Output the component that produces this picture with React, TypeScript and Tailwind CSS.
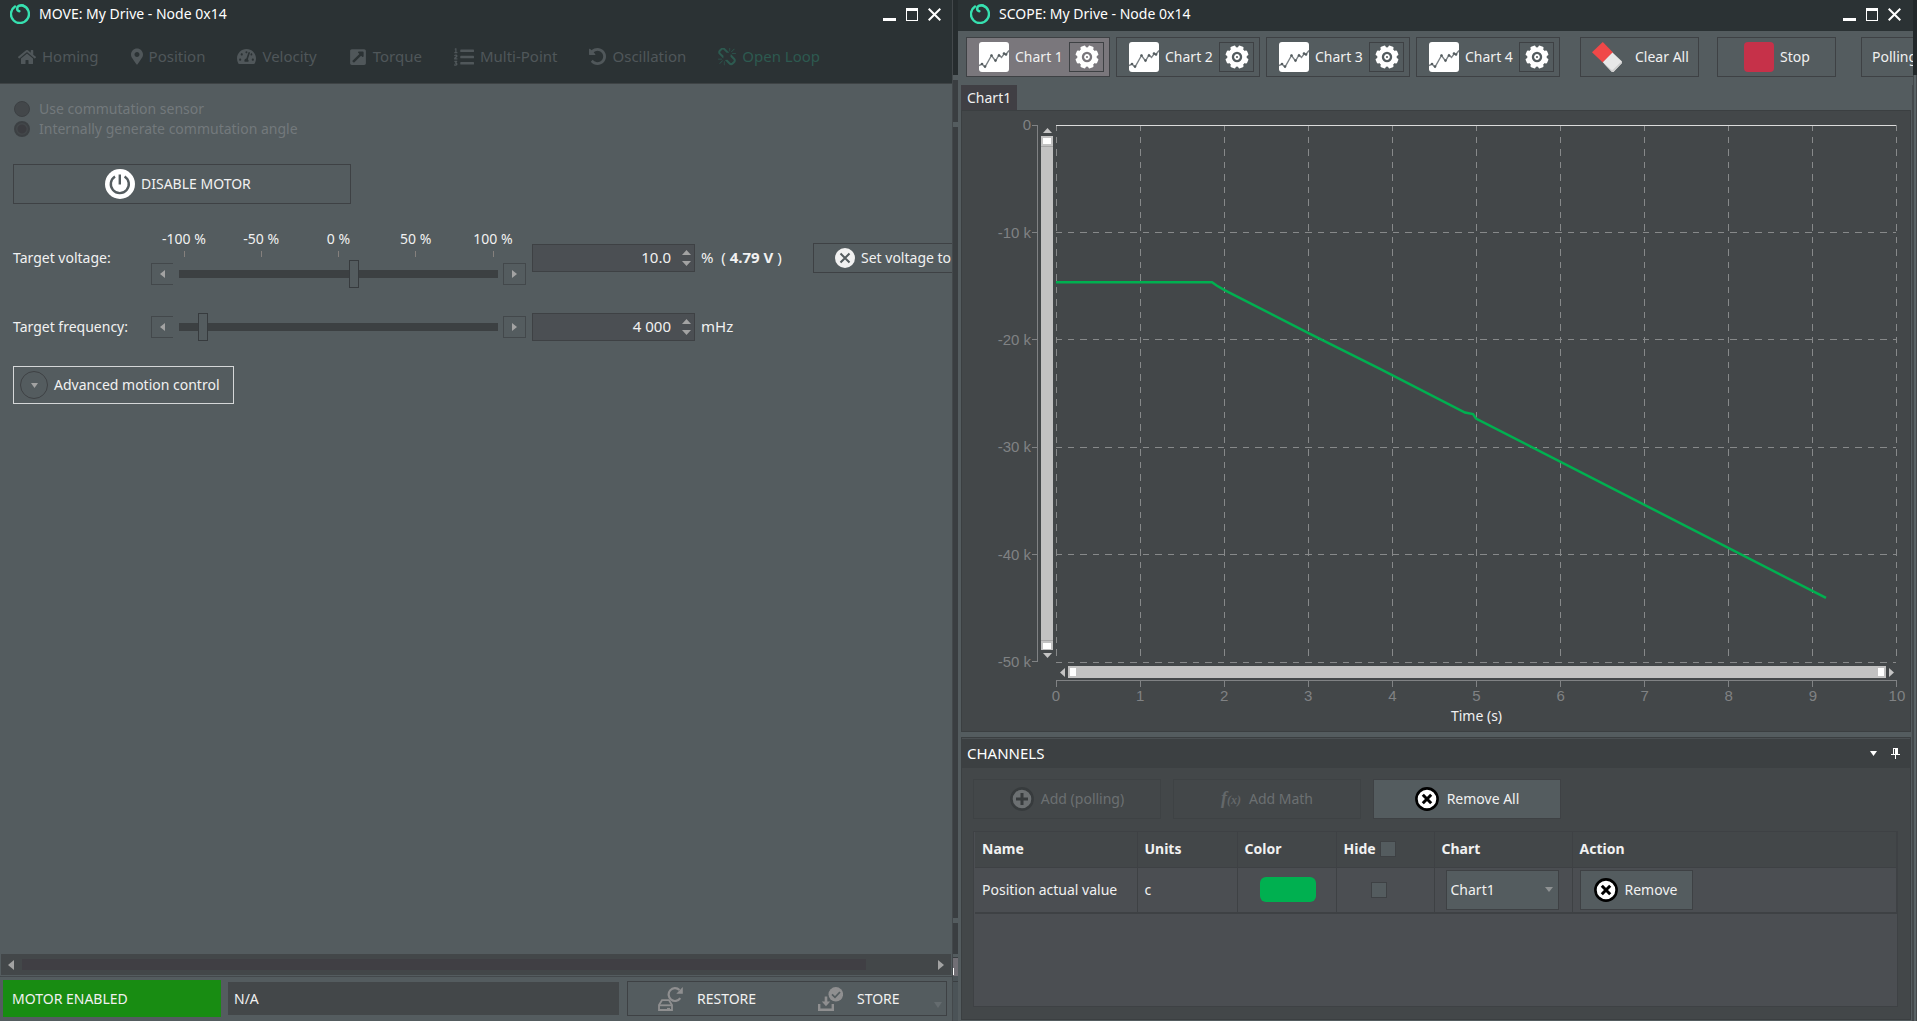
import { useState } from "react";
import type { ReactNode } from "react";
import { FaHome, FaMapMarkerAlt, FaTachometerAlt, FaExternalLinkSquareAlt, FaListOl } from "react-icons/fa";

/* ---------- icons ---------- */

function Logo() {
  return (
    <svg viewBox="0 0 20 20" className="size-5 shrink-0" fill="none" stroke="#37e0b0" strokeLinecap="round" aria-hidden="true">
      <path d="M5 2.500A9 9 0 1 0 12.800 1.500" strokeWidth="2.400" />
      <path d="M12.800 1.500C9.500 .8 7.200 2.500 7.200 4.400S8.200 7.300 9.300 7.200" strokeWidth="2.600" />
    </svg>
  );
}

type Direction = "up" | "down" | "left" | "right";
const triangles: Record<Direction, string> = {
  up: "M0 10 5 0 10 10Z",
  down: "M0 0H10L5 10Z",
  left: "M10 0V10L0 5Z",
  right: "M0 0 10 5 0 10Z",
};

function Triangle({ dir, className }: { dir: Direction; className: string }) {
  return (
    <svg viewBox="0 0 10 10" preserveAspectRatio="none" className={className} fill="currentColor" aria-hidden="true">
      <path d={triangles[dir]} />
    </svg>
  );
}

function UndoIcon() {
  return (
    <svg viewBox="0 128 1536 1536" className="size-[17px]" fill="currentColor" aria-hidden="true">
      <path d="M1536 896q0 156-61 298t-164 245-245 164-298 61q-172 0-327-72.500t-264-204.500q-7-10-6.500-22.500t8.500-20.500l137-138q10-9 25-9 16 2 23 12 73 95 179 147t225 52q104 0 198.500-40.500t163.500-109.500 109.500-163.500 40.500-198.500-40.500-198.500-109.500-163.500-163.500-109.500-198.500-40.500q-98 0-188 35.500t-160 101.500l137 138q31 30 14 69-17 40-59 40h-448q-26 0-45-19t-19-45v-448q0-42 40-59 39-17 69 14l130 129q107-101 244.500-156.500t284.500-55.500q156 0 298 61t245 164 164 245 61 298z" />
    </svg>
  );
}

function BrokenChainIcon() {
  return (
    <svg viewBox="0 64 1664 1664" className="size-[18px]" fill="currentColor" aria-hidden="true">
      <path d="M439 1271l-256 256q-11 9-23 9t-23-9q-9-10-9-23t9-23l256-256q10-9 23-9t23 9q9 10 9 23t-9 23zm169 41v320q0 14-9 23t-23 9-23-9-9-23v-320q0-14 9-23t23-9 23 9 9 23zm-224-224q0 14-9 23t-23 9h-320q-14 0-23-9t-9-23 9-23 23-9h320q14 0 23 9t9 23zm1264 128q0 120-85 203l-147 146q-83 83-203 83-121 0-204-85l-334-335q-21-21-42-56l239-18 273 274q27 27 68 27.500t68-26.500l147-146q28-28 28-67 0-40-28-68l-274-275 18-239q35 21 56 42l336 336q84 86 84 204zm-617-724l-239 18-273-274q-28-28-68-28-39 0-68 27l-147 146q-28 28-28 67 0 40 28 68l274 274-18 240q-35-21-56-42l-336-336q-84-86-84-204 0-120 85-203l147-146q83-83 203-83 121 0 204 85l334 335q21 21 42 56zm633 84q0 14-9 23t-23 9h-320q-14 0-23-9t-9-23 9-23 23-9h320q14 0 23 9t9 23zm-544-544v320q0 14-9 23t-23 9-23-9-9-23v-320q0-14 9-23t23-9 23 9 9 23zm407 151l-256 256q-11 9-23 9t-23-9q-9-10-9-23t9-23l256-256q10-9 23-9t23 9q9 10 9 23t-9 23z" />
    </svg>
  );
}

function PowerIcon() {
  return (
    <svg viewBox="0 0 30 30" className="size-[30px]" aria-hidden="true">
      <circle cx="15" cy="15" r="15" fill="#fff" />
      <g fill="none" stroke="#545c5f" strokeWidth="2.400">
        <path d="M10 7.500A9 9 0 1 0 19.600 7.500" />
        <path d="M14.800 5.500v10" />
      </g>
    </svg>
  );
}

function CircleCross() {
  return (
    <svg viewBox="0 0 20 20" className="size-5 shrink-0" aria-hidden="true">
      <circle cx="10" cy="10" r="10" fill="#f1f1f1" />
      <path d="M5.500 5.500l9 9M14.500 5.500l-9 9" stroke="#545c5f" strokeWidth="2" />
    </svg>
  );
}

function RemoveIcon() {
  return (
    <svg viewBox="0 0 24 24" className="size-6 shrink-0" aria-hidden="true">
      <circle cx="12" cy="12" r="10.600" fill="#fff" stroke="#000" strokeWidth="2.600" />
      <path d="M7.800 7.800l8.400 8.400M16.200 7.800l-8.400 8.400" stroke="#000" strokeWidth="3" />
    </svg>
  );
}

function AddIcon() {
  return (
    <svg viewBox="0 0 24 24" className="size-6 shrink-0" aria-hidden="true">
      <circle cx="12" cy="12" r="10.600" fill="#6c7072" stroke="#373b3d" strokeWidth="2.600" />
      <path d="M12 6v12M6 12h12" stroke="#373b3d" strokeWidth="3" />
    </svg>
  );
}

function ChartIcon() {
  return (
    <svg viewBox="0 0 30 30" className="size-[30px] shrink-0" aria-hidden="true">
      <rect width="30" height="30" rx="3" fill="#fff" />
      <path
        d="M0 23.500 3 22l3 3 6.500-11.500 4 5.500L20 13l2.500 2.500L25 12l2 .500L30 8.500"
        fill="none"
        stroke="#7b8184"
        strokeWidth="1.400"
      />
      <g fill="#545c5f">
        <circle cx="3" cy="22" r="1.300" />
        <circle cx="6" cy="24.500" r="1.300" />
        <circle cx="12.500" cy="13.500" r="1.300" />
        <circle cx="16.500" cy="18.500" r="1.300" />
        <circle cx="20" cy="13.500" r="1.300" />
        <circle cx="25" cy="11.500" r="1.300" />
        <circle cx="27" cy="12.500" r="1.300" />
      </g>
    </svg>
  );
}

const teeth = [22.5, 67.5, 112.5, 157.5, 202.5, 247.5, 292.5, 337.5];
function GearIcon() {
  return (
    <svg viewBox="-12 -12 24 24" className="size-6" aria-hidden="true">
      <circle r="7.500" fill="none" stroke="#fff" strokeWidth="4.600" />
      {teeth.map((a) => (
        <rect key={a} x="-2.700" y="-11.600" width="5.400" height="4" rx="1.200" fill="#fff" transform={`rotate(${a})`} />
      ))}
      <circle r="2" fill="none" stroke="#fff" strokeWidth="1.800" />
    </svg>
  );
}

function EraserIcon() {
  return (
    <svg viewBox="0 0 30 30" className="size-[30px] shrink-0" aria-hidden="true">
      <path d="M10.800 0 21 10.500 10.800 20.500 0 10.300Z" fill="#f04848" />
      <path d="M20.500 10.500 29.500 19q1 1.200 0 2.400l-7.600 8q-1.200 1-2.400 0L10.800 20.300Z" fill="#e8e8e8" />
      <path d="M11.600 21.200 19.500 29.400q1.200 1 2.400 0l7.600-8q1-1.200.2-2.200l-8.500 8.300q-1 .8-2 0Z" fill="#cfcfcf" />
    </svg>
  );
}

function RestoreIcon() {
  return (
    <svg viewBox="0 0 25 24" className="h-6 w-[25px]" aria-hidden="true" fill="none" stroke="#8f8f90">
      <path d="M1 23V18L4 13.200h7L14 18v5Z" strokeWidth="1.800" />
      <path d="M1 18.300h13" strokeWidth="1.800" />
      <path d="M9 21.500h3" strokeWidth="1.200" />
      <path d="M22.300 11.200A6.400 6.400 0 1 1 21.500 3" strokeWidth="2.200" />
      <path d="M24.800 0v6.800h-6.500Z" fill="#8f8f90" stroke="none" />
    </svg>
  );
}

function StoreIcon() {
  return (
    <svg viewBox="0 0 25 24" className="h-6 w-[25px]" aria-hidden="true" fill="none" stroke="#8f8f90">
      <circle cx="17.800" cy="7.300" r="7.300" fill="#8f8f90" stroke="none" />
      <path d="M14 7.300l3 3 5-5.300" stroke="#545c5f" strokeWidth="1.800" />
      <path d="M1.200 17v5.800h13.600V17" strokeWidth="2.400" />
      <path d="M8 9.500v7" strokeWidth="2.600" />
      <path d="M3.800 14.500h8.400L8 19.200Z" fill="#8f8f90" stroke="none" />
    </svg>
  );
}

function PinIcon() {
  return (
    <svg viewBox="0 0 9 11" className="h-[11px] w-[9px]" aria-hidden="true" shapeRendering="crispEdges">
      <path d="M2 0h5v6h2v1H0V6h2Z M4 7h1v4H4Z" fill="#fff" />
      <path d="M3 1h1v5H3Z" fill="#3c4042" />
    </svg>
  );
}

/* ---------- window frame ---------- */

function TitleBar({ title, className }: { title: string; className: string }) {
  return (
    <header className={`flex h-[31px] shrink-0 items-center bg-[#2b3234] pb-[3px] text-white ${className}`}>
      <Logo />
      <h1 className="ml-[9px] flex-1 text-sm whitespace-nowrap">{title}</h1>
      <div className="flex h-[13px] gap-[10px]">
        <button aria-label="Minimize" className="flex w-[13px] items-end">
          <span className="h-[3px] w-full bg-white" />
        </button>
        <button aria-label="Maximize" className="h-[13px] w-3 border border-t-[3px] border-white" />
        <button aria-label="Close" className="size-[13px]">
          <svg viewBox="0 0 13 13" stroke="#fff" strokeWidth="2" aria-hidden="true">
            <path d="M.700.700l11.600 11.600M12.300.700.700 12.300" />
          </svg>
        </button>
      </div>
    </header>
  );
}

/* ---------- MOVE window ---------- */

const modes = [
  { name: "Homing", icon: <FaHome className="size-[18px]" /> },
  { name: "Position", icon: <FaMapMarkerAlt className="h-[17px] w-3" /> },
  { name: "Velocity", icon: <FaTachometerAlt className="size-[19px]" /> },
  { name: "Torque", icon: <FaExternalLinkSquareAlt className="size-[18px]" /> },
  { name: "Multi-Point", icon: <FaListOl className="size-5" /> },
  { name: "Oscillation", icon: <UndoIcon /> },
  { name: "Open Loop", icon: <BrokenChainIcon /> },
];

function Slider(props: { label: string; min: number; max: number; value: number; onChange: (v: number) => void }) {
  const { label, min, max, value, onChange } = props;
  const step = (max - min) / 100;
  const clamp = (v: number) => Math.min(max, Math.max(min, v));
  return (
    <div className="flex h-7 w-[375px] items-center">
      <button
        aria-label={`${label} down`}
        onClick={() => onChange(clamp(value - step))}
        className="flex h-[22px] w-[22px] items-center justify-center border-y border-l border-[#43484b] text-[#a3a3a3]"
      >
        <Triangle dir="left" className="h-2 w-[5px]" />
      </button>
      <input
        type="range"
        aria-label={label}
        min={min}
        max={max}
        value={value}
        onChange={(e) => onChange(Number(e.target.value))}
        className="mr-[5px] ml-[6px] h-7 min-w-0 flex-1 appearance-none bg-transparent [&::-webkit-slider-runnable-track]:h-2 [&::-webkit-slider-runnable-track]:bg-[#3c4042] [&::-webkit-slider-thumb]:-mt-[10px] [&::-webkit-slider-thumb]:h-7 [&::-webkit-slider-thumb]:w-[10px] [&::-webkit-slider-thumb]:appearance-none [&::-webkit-slider-thumb]:border [&::-webkit-slider-thumb]:border-[#373b3e] [&::-webkit-slider-thumb]:bg-[#545c5f]"
      />
      <button
        aria-label={`${label} up`}
        onClick={() => onChange(clamp(value + step))}
        className="flex h-[22px] w-[23px] items-center justify-center border border-[#43484b] text-[#a3a3a3]"
      >
        <Triangle dir="right" className="h-2 w-[5px]" />
      </button>
    </div>
  );
}

function Spinner({ id, value }: { id: string; value: string }) {
  return (
    <div className="flex h-7 w-[163px] border border-[#3e4144] bg-[#4b4f53]">
      <input
        id={id}
        type="text"
        defaultValue={value}
        className="min-w-0 flex-1 bg-transparent pr-[11px] text-right text-[15px] outline-none"
      />
      <div className="flex w-[12px] flex-col justify-between py-[5px] text-[#a3a3a3]">
        <button aria-label="Increase" className="flex">
          <Triangle dir="up" className="h-[5px] w-[9px]" />
        </button>
        <button aria-label="Decrease" className="flex">
          <Triangle dir="down" className="h-[5px] w-[9px]" />
        </button>
      </div>
    </div>
  );
}

function MoveWindow() {
  const [voltage, setVoltage] = useState(10);
  const [frequency, setFrequency] = useState(4000);
  return (
    <section className="flex min-w-0 flex-col border-r border-[#43484b] bg-[#545c5f]">
      <TitleBar title="MOVE: My Drive - Node 0x14" className="pr-[11px] pl-[10px]" />
      <nav className="flex h-[53px] shrink-0 items-center gap-8 overflow-hidden border-b border-[#3e4345] bg-[#2b3234] pl-[18px]">
        {modes.map((m, i) => (
          <button
            key={m.name}
            className={
              i === 6
                ? "flex items-center gap-[6px] text-[15px] whitespace-nowrap text-[#2d5a50]"
                : "flex items-center gap-[6px] text-[15px] whitespace-nowrap text-[#50575a]"
            }
          >
            {m.icon}
            {m.name}
          </button>
        ))}
      </nav>

      <div className="min-h-0 flex-1 overflow-hidden pl-[13px]">
        <fieldset disabled className="mt-[15px] text-sm text-[#73797c]">
          {["Use commutation sensor", "Internally generate commutation angle"].map((text, i) => (
            <label key={text} className="flex h-5 items-center gap-[9px] pl-px">
              <input
                type="radio"
                name="commutation"
                defaultChecked={i === 1}
                className="size-4 appearance-none rounded-full border border-[#3c4043] bg-[#43474a] checked:border-2 checked:bg-[radial-gradient(circle,#3b3c40_0_4px,#43474a_5px)]"
              />
              {text}
            </label>
          ))}
        </fieldset>

        <button className="mt-[25px] flex h-10 w-[338px] items-center gap-[6px] border border-[#3e4144] pl-[91px] text-sm">
          <PowerIcon />
          DISABLE MOTOR
        </button>

        <div className="mt-[25px] grid grid-cols-[138px_375px_auto] gap-y-[25px] text-sm">
          <label htmlFor="voltage" className="pt-[19px]">
            Target voltage:
          </label>
          <div>
            <div className="flex w-[375px] justify-between px-[33px] text-center">
              {["-100 %", "-50 %", "0 %", "50 %", "100 %"].map((t) => (
                <div key={t} className="flex w-0 flex-col items-center whitespace-nowrap">
                  <span className="pb-[2px] leading-5">{t}</span>
                  <span className="h-[6px] w-px bg-[#85807d]" />
                </div>
              ))}
            </div>
            <div className="pt-[3px]">
              <Slider label="Voltage slider" min={-100} max={100} value={voltage} onChange={setVoltage} />
            </div>
          </div>
          <div className="flex items-start pt-[14px] pl-[6px] whitespace-nowrap">
            <div className="pt-px">
              <Spinner id="voltage" value="10.0" />
            </div>
            <span className="w-[118px] pt-1 pl-[6px] text-[15px] whitespace-pre">
              %&nbsp; ( <b>4.79 V</b> )
            </span>
            <button className="flex h-[30px] w-[200px] shrink-0 items-center gap-[6px] border border-[#3e4144] pl-[21px]">
              <CircleCross />
              Set voltage to 0
            </button>
          </div>

          <label htmlFor="frequency" className="pt-1">
            Target frequency:
          </label>
          <Slider label="Frequency slider" min={0} max={65000} value={frequency} onChange={setFrequency} />
          <div className="flex items-center pl-[6px] text-[15px]">
            <Spinner id="frequency" value="4 000" />
            <span className="pl-[6px]">mHz</span>
          </div>
        </div>

        <button className="mt-[25px] flex h-[38px] items-center gap-[6px] border border-[#d5d7d8] pr-[13px] pl-[6px] text-sm">
          <span className="flex size-7 items-center justify-center rounded-full border border-[#3e4144] text-[#a3a3a3]">
            <Triangle dir="down" className="h-[5px] w-[7px]" />
          </span>
          Advanced motion control
        </button>
      </div>

      <div className="mx-px flex h-[21px] shrink-0 items-center bg-[#434749] px-[7px] text-[#a3a3a3]">
        <Triangle dir="left" className="h-[10px] w-[6px]" />
        <div className="mx-2 flex-1">
          <div className="h-[11px] w-[93%] bg-[#403f44]" />
        </div>
        <Triangle dir="right" className="h-[10px] w-[6px]" />
      </div>

      <footer className="mt-px flex h-[45px] shrink-0 items-center border-t border-[#43484b] pr-[5px] pb-1 pl-[3px] text-sm">
        <div className="mt-[3px] flex h-[37px] w-[218px] items-center bg-[#188c12] pl-[9px]">MOTOR ENABLED</div>
        <div className="mt-[3px] ml-[7px] flex h-[33px] min-w-0 flex-1 items-center bg-[#434749] pl-[6px]">N/A</div>
        <div className="mt-[3px] ml-2 flex h-[35px] w-[320px] items-center border border-[#3e4144] pl-[30px]">
          <button className="flex w-40 items-center gap-[14px]">
            <RestoreIcon />
            RESTORE
          </button>
          <button className="flex items-center gap-[14px]">
            <StoreIcon />
            STORE
          </button>
          <Triangle dir="down" className="mt-3 mr-[4px] ml-auto h-[6px] w-2 text-[#656c6f]" />
        </div>
      </footer>
    </section>
  );
}

function Splitter() {
  return (
    <div className="flex flex-col bg-[#3a3e41]" aria-hidden="true">
      <div className="h-[75px] bg-[#262c2e]" />
      <div className="h-[5px] bg-[#545c5f]" />
      <div className="h-[42px]" />
      <div className="h-[5px] bg-[#545c5f]" />
      <div className="flex-1" />
      <div className="h-[5px] bg-[#545c5f]" />
      <div className="h-[31px]" />
      <div className="h-[3px] bg-[#545c5f]" />
      <div className="mt-px flex h-[18px] items-end bg-[#716f75]">
        <span className="mb-px h-[7px] w-px bg-white" />
      </div>
      <div className="h-[5px] bg-[#4b5357]" />
      <div className="mt-px h-[39px] bg-[#4b5357]" />
    </div>
  );
}

/* ---------- SCOPE window ---------- */

const ratios = [0, 1, 2, 3, 4, 5, 6, 7, 8, 9, 10];

function Chart() {
  return (
    <div className="grid min-h-0 flex-1 grid-cols-[70px_6px_18px_minmax(0,1fr)] grid-rows-[minmax(0,1fr)_18px_auto] border border-[#3b3f41] bg-[#434749] pt-[14px] pr-[14px] font-['Liberation_Sans',Arial,sans-serif] text-[15px] text-[#808284]">
      <div className="flex flex-col justify-between pr-px text-right">
        {["0", "-10 k", "-20 k", "-30 k", "-40 k", "-50 k"].map((t) => (
          <span key={t} className="flex h-0 items-center justify-end">
            {t}
          </span>
        ))}
      </div>
      <div className="flex flex-col justify-between border-r border-[#808284]">
        {[0, 1, 2, 3, 4, 5].map((n) => (
          <span key={n} className="h-px bg-[#808284]" />
        ))}
      </div>
      <div className="flex flex-col items-center pt-[3px] pb-1 text-[#c4c4c4]">
        <Triangle dir="up" className="h-[5px] w-[9px]" />
        <div className="my-[3px] flex w-3 flex-1 flex-col items-center justify-between bg-[#c2c2c2]">
          <span className="flex h-[11px] w-full items-center justify-center border-b border-[#a6a6a6]">
            <i className="h-[6px] w-2 bg-white" />
          </span>
          <span className="flex h-[10px] w-full items-center justify-center border-t border-[#a6a6a6]">
            <i className="h-[6px] w-2 bg-white" />
          </span>
        </div>
        <Triangle dir="down" className="h-[5px] w-[9px]" />
      </div>
      <div className="relative">
        <svg className="absolute inset-0 h-full w-full overflow-visible" shapeRendering="crispEdges" aria-hidden="true">
          {ratios.map((r) => (
            <line key={r} x1={`${r * 10}%`} x2={`${r * 10}%`} y1="0" y2="100%" stroke="#87898a" strokeDasharray="6.500 6" strokeDashoffset="1" />
          ))}
          {[1, 2, 3, 4, 5].map((r) => (
            <line key={r} x1="0" x2="100%" y1={`${r * 20}%`} y2={`${r * 20}%`} stroke="#87898a" strokeDasharray="6.500 6" strokeDashoffset="1" />
          ))}
          <line x1="0" x2="100%" y1="0" y2="0" stroke="#dcdcdc" strokeWidth="1" />
        </svg>
        <svg viewBox="0 0 840 536" preserveAspectRatio="none" className="absolute inset-0 h-full w-full" role="img" aria-label="Position actual value">
          <polyline
            points="0,157 156,157 161,160.500 169,165 253,208 324,243.500 409,287 417,288.500 420,293 770,472"
            fill="none"
            stroke="#00b050"
            strokeWidth="2.500"
            vectorEffect="non-scaling-stroke"
          />
        </svg>
      </div>

      <div className="col-start-4 flex items-center gap-[3px] pt-1 pr-[2px] pb-[2px] pl-1 text-[#c4c4c4]">
        <Triangle dir="left" className="h-[9px] w-[5px]" />
        <div className="flex h-3 flex-1 items-center justify-between bg-[#c2c2c2] px-[2px]">
          <i className="h-2 w-[6px] bg-white" />
          <i className="h-2 w-[6px] bg-white" />
        </div>
        <Triangle dir="right" className="h-[9px] w-[5px]" />
      </div>

      <div className="col-start-4 -mr-px border-t border-[#808284]">
        <div className="flex justify-between">
          {ratios.map((r) => (
            <span key={r} className="h-[6px] w-px bg-[#808284]" />
          ))}
        </div>
        <div className="flex justify-between leading-[18px]">
          {ratios.map((r) => (
            <span key={r} className="flex w-0 justify-center">
              {r}
            </span>
          ))}
        </div>
        <p className="h-[26px] text-center font-['Noto_Sans','Open_Sans',sans-serif] text-sm leading-[22px] text-[#f1f1f1]">Time (s)</p>
      </div>
    </div>
  );
}

function ToolButton({ children, className }: { children: ReactNode; className: string }) {
  return <button className={`flex h-10 shrink-0 items-center border border-[#3e4144] whitespace-nowrap ${className}`}>{children}</button>;
}

const cellBase = "border-r border-[#3e4144]";

function ScopeWindow() {
  return (
    <section className="flex min-w-0 flex-col bg-[#545c5f] text-sm">
      <TitleBar title="SCOPE: My Drive - Node 0x14" className="pr-3 pl-3" />
      <div className="flex h-[54px] shrink-0 overflow-hidden pt-[6px] pl-2">
        <div className="flex gap-[6px]">
          {[1, 2, 3, 4].map((n) => (
            <div
              key={n}
              className={
                n === 1
                  ? "flex h-10 w-36 items-center justify-between border border-[#3e4144] bg-[#7a777c] pr-[5px] pl-3"
                  : "flex h-10 w-36 items-center justify-between border border-[#3e4144] pr-[5px] pl-3"
              }
            >
              <button className="flex items-center gap-[6px] whitespace-nowrap">
                <ChartIcon />
                Chart {n}
              </button>
              <button aria-label={`Chart ${n} settings`} className="flex h-[30px] w-[35px] items-center justify-center border border-[#3e4144]">
                <GearIcon />
              </button>
            </div>
          ))}
        </div>
        <ToolButton className="ml-5 w-[119px] gap-[13px] pl-[11px]">
          <EraserIcon />
          Clear All
        </ToolButton>
        <ToolButton className="ml-[18px] w-[119px] gap-[6px] pl-[26px]">
          <span className="size-[30px] rounded bg-[#c63149]" />
          Stop
        </ToolButton>
        <ToolButton className="ml-[25px] w-[119px] pl-[10px]">Polling</ToolButton>
      </div>

      <main className="flex min-h-0 flex-1 flex-col border-r border-[#43484b] pr-px pb-px pl-[3px]">
        <button className="flex h-[25px] w-14 shrink-0 items-center bg-[#403f44] pl-[6px]">Chart1</button>
        <Chart />

        <section className="mt-[5px] shrink-0 border border-[#3b3f41] bg-[#434749]">
          <header className="flex h-[30px] items-center border-t border-[#4b5053] bg-[#3c4042] pr-[10px] pl-[5px] text-white">
            <h2 className="flex-1 text-[15px]">CHANNELS</h2>
            <button aria-label="Panel menu" className="mr-[14px]">
              <Triangle dir="down" className="h-[5px] w-[7px]" />
            </button>
            <button aria-label="Pin panel">
              <PinIcon />
            </button>
          </header>
          <div className="pt-[11px] pr-3 pb-3 pl-[11px]">
            <div className="flex gap-3">
              <button disabled className="flex h-10 w-[188px] items-center justify-center gap-[7px] border border-[#3e4244] text-[#6c7072]">
                <AddIcon />
                Add (polling)
              </button>
              <button disabled className="flex h-10 w-[188px] items-center justify-center gap-[8px] border border-[#3e4244] text-[#6c7072]">
                <span className="flex items-baseline font-['Liberation_Serif',serif] font-bold text-[#64686a] italic">
                  <span className="text-[18px]">f</span>
                  <span className="text-[12px]">(x)</span>
                </span>
                Add Math
              </button>
              <button className="flex h-10 w-[188px] items-center justify-center gap-2 border border-[#3e4144] bg-[#545c5f]">
                <RemoveIcon />
                Remove All
              </button>
            </div>

            <div className="mt-3 h-44 border border-[#3e4144] bg-[#4b4e52] pl-px">
              <table className="w-full table-fixed border-collapse text-left">
                <thead className="bg-[#434749]">
                  <tr className="h-[35px] border-b border-[#3e4144] [&>th]:border-r [&>th]:border-[#3e4144] [&>th]:pl-[7px]">
                    <th className="w-[162px]">Name</th>
                    <th className="w-[100px]">Units</th>
                    <th className="w-[99px]">Color</th>
                    <th className="w-[98px]">
                      <label className="flex items-center gap-1">
                        Hide
                        <input type="checkbox" className="size-4 appearance-none border border-[#3e4144] bg-[#545c5f]" />
                      </label>
                    </th>
                    <th className="w-[138px]">Chart</th>
                    <th>Action</th>
                  </tr>
                </thead>
                <tbody>
                  <tr className="h-[46px] border-b-2 border-[#3e4144]">
                    <td className={`${cellBase} pl-[7px] whitespace-nowrap`}>Position actual value</td>
                    <td className={`${cellBase} pl-[7px]`}>c</td>
                    <td className={`${cellBase} pl-[3px]`}>
                      <button aria-label="Channel color" className="mx-auto block h-[25px] w-14 rounded-md bg-[#00b050]" />
                    </td>
                    <td className={`${cellBase} pr-3`}>
                      <input
                        type="checkbox"
                        aria-label="Hide Position actual value"
                        className="mx-auto block size-4 appearance-none border border-[#3e4144] bg-[#545c5f]"
                      />
                    </td>
                    <td className={`${cellBase} pl-[11px]`}>
                      <div className="relative w-[113px]">
                        <select
                          aria-label="Chart"
                          className="block h-10 w-full appearance-none border border-[#3e4144] bg-[#545c5f] pl-1"
                        >
                          <option>Chart1</option>
                        </select>
                        <Triangle dir="down" className="pointer-events-none absolute top-[17px] right-[6px] h-[5px] w-2 text-[#8f9293]" />
                      </div>
                    </td>
                    <td className={`${cellBase} pl-[7px]`}>
                      <button className="flex h-10 w-[113px] items-center gap-[7px] border border-[#3e4144] bg-[#545c5f] pl-[13px]">
                        <RemoveIcon />
                        Remove
                      </button>
                    </td>
                  </tr>
                </tbody>
              </table>
            </div>
          </div>
        </section>
      </main>
    </section>
  );
}

export default function App() {
  return (
    <div className="grid h-screen w-full grid-cols-[minmax(0,953fr)_5px_minmax(0,955fr)_4px] overflow-hidden bg-[#545c5f] font-['Noto_Sans','Open_Sans',sans-serif] text-sm text-[#f1f1f1]">
      <MoveWindow />
      <Splitter />
      <ScopeWindow />
      <div className="flex flex-col" aria-hidden="true">
        <div className="h-[75px] bg-[#22282a]" />
        <div className="flex-1 border-x border-[#43484b] bg-[#5a6366]" />
      </div>
    </div>
  );
}
